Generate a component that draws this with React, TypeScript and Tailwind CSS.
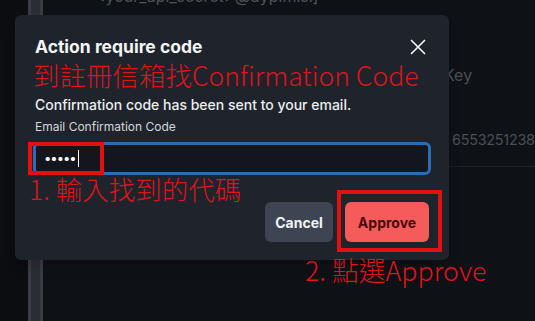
import React from "react"

const cjk = { fontFamily: '"Noto Sans CJK TC", "Noto Sans", sans-serif' }

function CloseIcon() {
  return (
    <svg width="16" height="16" viewBox="0 0 16 16" className="mr-[3px]">
      <path d="M1.5 1.5 L14.5 14.5 M14.5 1.5 L1.5 14.5" stroke="#f3f4f6" strokeWidth="1.7" strokeLinecap="round" />
    </svg>
  )
}

export default function App() {
  return (
    <div className="relative h-[321px] w-[535px] overflow-hidden bg-[#0e1116]" style={{ fontFamily: "Inter, 'Liberation Sans', sans-serif" }}>
      {/* page behind the modal */}
      <div className="flex h-full">
        <div className="w-[28px] bg-[#0b0d11]" />
        <div className="w-[15px] border-x-[3px] border-[#393c42] bg-[#2a2d33]" />
        <div className="flex flex-1 flex-col">
          <div className="ml-[52px] mt-[-16px] text-[16px] leading-6 text-[#4e5259]">&lt;your_api_secret&gt;@dypimisi]</div>
          <div className="ml-[401px] mt-[55px] text-[16px] leading-6 text-[#4b4f56]">Key</div>
          <div className="ml-[409px] mt-[41px] text-[14.3px] leading-6 tracking-[-0.2px] text-[#4b4f56]">6553251238</div>
          <div className="mt-[14px] border-b border-[#1c1f25]" />
        </div>
      </div>

      {/* modal */}
      <div className="absolute left-[15px] top-[15px] flex h-[245px] w-[434px] flex-col rounded-[6px] bg-[#1f232b] px-[20px] pt-[20px] shadow-lg">
        <div className="flex items-center justify-between">
          <h2 className="text-[17.5px] font-bold leading-6 text-[#f3f4f6]">Action require code</h2>
          <CloseIcon />
        </div>
        <p className="mt-[36px] text-[14px] font-medium leading-5 text-[#eceef1]">Confirmation code has been sent to your email.</p>
        <label className="mt-[4px] text-[12px] leading-4 text-[#d4d7dc]">Email Confirmation Code</label>
        <div className="relative mx-[-2px] mt-[7px]">
          <div className="flex h-[33px] items-center rounded-[6px] border-[3px] border-[#2c6cb3] bg-[#13161c] pl-[8px]">
            <span className="text-[13px] leading-none tracking-[-1px] text-white">•••••</span>
            <span className="ml-[2px] h-[17px] w-[1px] bg-white" />
          </div>
          <div className="absolute left-[-5px] top-0 h-[33px] w-[76px] border-4 border-[#e31010]" />
        </div>
        <div className="mt-[27px] flex justify-end gap-3">
          <button className="h-[40px] w-[68px] rounded-[6px] bg-[#3e4451] text-[14px] font-bold text-[#f3f4f6]">Cancel</button>
          <button className="h-[40px] w-[84px] rounded-[6px] bg-[#f45c5c] text-[14px] font-bold text-[#4a0b0b]">Approve</button>
        </div>

        {/* annotations */}
        <div className="absolute left-[18px] top-[47px] text-[26.5px] font-light leading-none text-[#df141b]" style={cjk}>到註冊信箱找Confirmation Code</div>
        <div className="absolute left-[14px] top-[161px] text-[26.5px] font-light leading-none text-[#df141b]" style={cjk}>1. 輸入找到的代碼</div>
        <div className="absolute left-[322px] top-[175px] h-[62px] w-[105px] border-4 border-[#e31010]" />
      </div>
      <div className="absolute left-[305px] top-[257px] text-[26.8px] font-light leading-none text-[#df141b]" style={cjk}>2. 點選Approve</div>
    </div>
  )
}
